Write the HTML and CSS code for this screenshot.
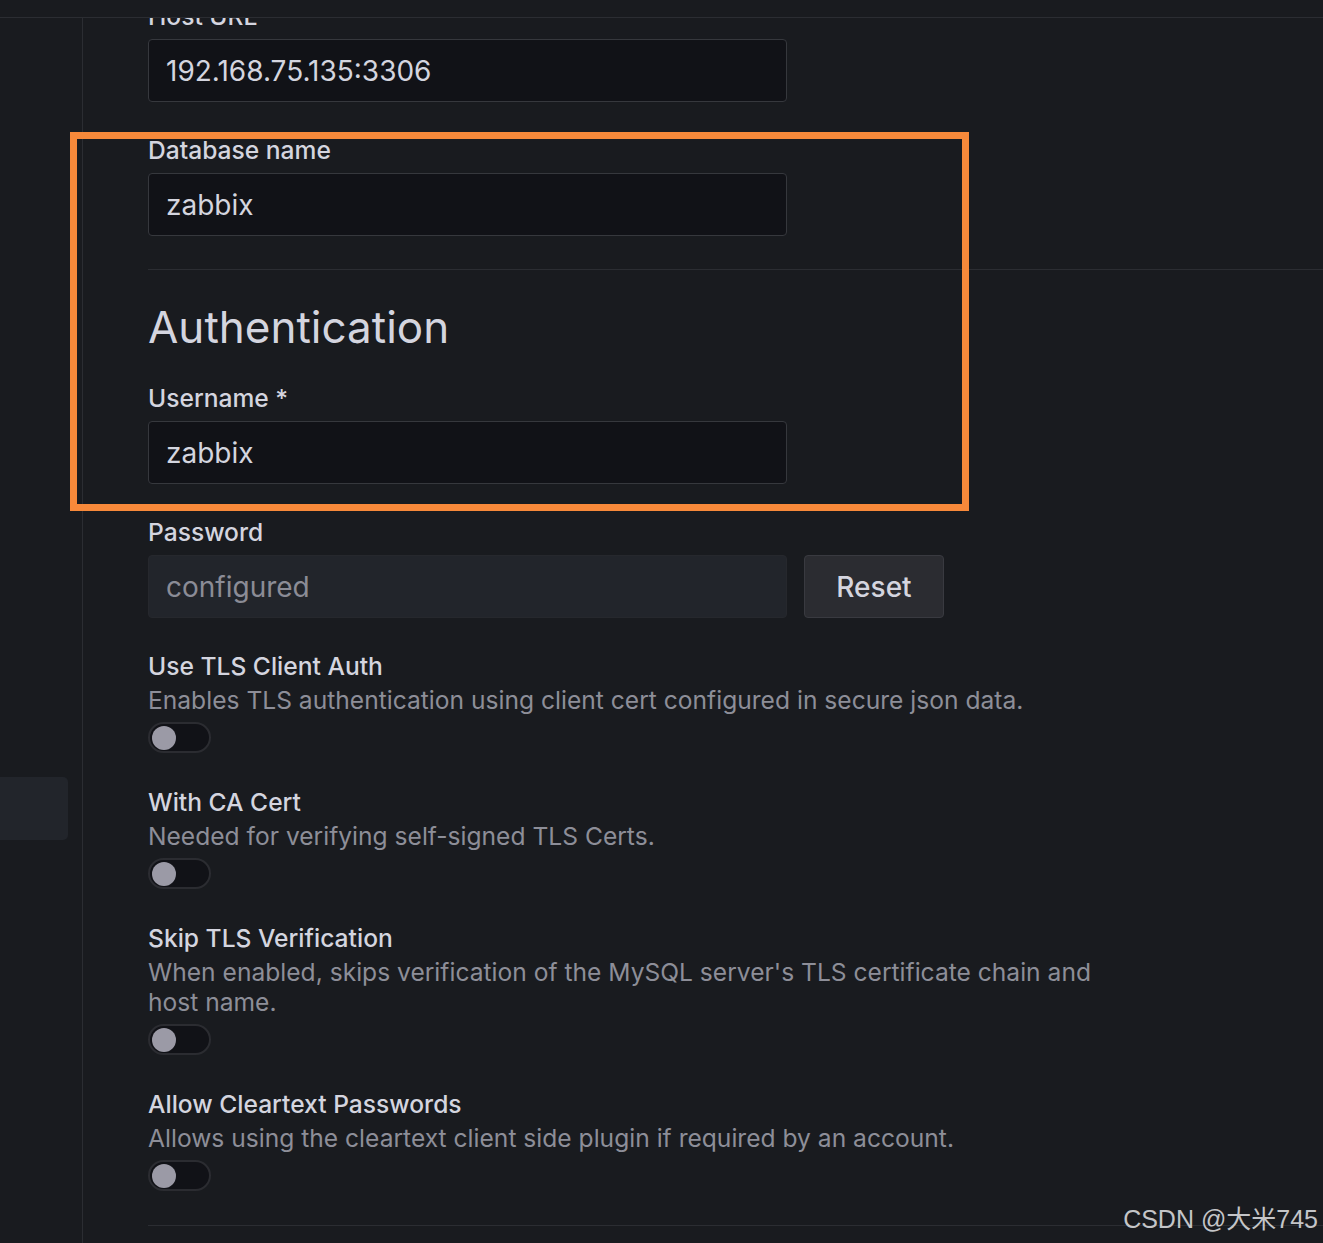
FILE: index.html
```html
<!DOCTYPE html>
<html lang="en">
<head>
    <meta charset="UTF-8">
    <meta name="viewport" content="width=device-width, initial-scale=1.0">
    <title>MySQL data source</title>
    <link rel="stylesheet" href="styles.css">
</head>
<body>
    <div class="topbar"></div>
    <div class="frame">
        <nav class="sidebar">
            <div class="nav-item"></div>
        </nav>
        <section class="main">
            <div class="field first">
                <label class="label">Host URL</label>
                <div class="input">192.168.75.135:3306</div>
            </div>
            <div class="field">
                <label class="label">Database name</label>
                <div class="input">zabbix</div>
            </div>
            <hr class="divider">

            <h3 class="heading">Authentication</h3>
            <div class="field">
                <label class="label">Username *</label>
                <div class="input">zabbix</div>
            </div>
            <div class="field">
                <label class="label">Password</label>
                <div class="row">
                    <div class="input disabled">configured</div>
                    <button class="button" type="button">Reset</button>
                </div>
            </div>

            <div class="toggle-field">
                <div class="label tight">Use TLS Client Auth</div>
                <div class="desc">Enables TLS authentication using client cert configured in secure json data.</div>
                <div class="switch"><span class="knob"></span></div>
            </div>
            <div class="toggle-field">
                <div class="label tight">With CA Cert</div>
                <div class="desc">Needed for verifying self-signed TLS Certs.</div>
                <div class="switch"><span class="knob"></span></div>
            </div>
            <div class="toggle-field">
                <div class="label tight">Skip TLS Verification</div>
                <div class="desc">When enabled, skips verification of the MySQL server's TLS certificate chain and host name.</div>
                <div class="switch"><span class="knob"></span></div>
            </div>
            <div class="toggle-field">
                <div class="label tight">Allow Cleartext Passwords</div>
                <div class="desc">Allows using the cleartext client side plugin if required by an account.</div>
                <div class="switch"><span class="knob"></span></div>
            </div>
            <hr class="divider">
        </section>
    </div>

    <div class="highlight"></div>
    <div class="watermark">CSDN @大米745</div>
</body>
</html>
```

FILE: styles.css
```css
body {
    margin: 0px;
    height: 1243px;
    overflow: hidden;
    background-color: #191b1f;
    font-family: Inter, "Noto Sans", sans-serif;
    color: #d4d5df;
    position: relative;
}
.topbar {
    height: 17px;
    border-bottom: 1px solid #2b2d32;
}
.frame {
    display: flex;
    height: 1225px;
}
.sidebar {
    width: 82px;
    flex-shrink: 0;
    border-right: 1px solid #2b2d32;
}
.nav-item {
    margin-top: 759px;
    width: 68px;
    height: 63px;
    background-color: #22252b;
    border-radius: 0px 5px 5px 0px;
}
.main {
    flex: 1;
    overflow: hidden;
    padding-left: 65px;
}
.field {
    margin-bottom: 33px;
}
.field.first {
    margin-top: -17px;
}
.label {
    display: block;
    font-size: 24.6px;
    line-height: 30px;
    font-weight: 500;
    margin-bottom: 8px;
}
.label.tight {
    margin-bottom: 4px;
}
.input {
    box-sizing: border-box;
    width: 639px;
    height: 63px;
    padding: 0px 17px;
    display: flex;
    align-items: center;
    font-size: 28px;
    background-color: #111217;
    border: 1px solid #36383d;
    border-radius: 4px;
}
.input.disabled {
    background-color: #22252b;
    border-color: #26282d;
    color: #8b8c96;
}
.row {
    display: flex;
    gap: 17px;
}
.button {
    box-sizing: border-box;
    width: 140px;
    height: 63px;
    font-family: inherit;
    font-size: 28px;
    font-weight: 500;
    color: #d4d5df;
    background-color: #2b2c31;
    border: 1px solid #393a40;
    border-radius: 4px;
}
.divider {
    margin: 0px;
    border: none;
    border-top: 1px solid #2b2d32;
}
.heading {
    margin: 31px 0px 30px 0px;
    font-size: 44px;
    line-height: 52px;
    font-weight: 400;
}
.toggle-field {
    margin-bottom: 34px;
}
.desc {
    max-width: 970px;
    font-size: 24.6px;
    line-height: 30px;
    color: #8d8e98;
    margin-bottom: 7px;
}
.switch {
    box-sizing: border-box;
    width: 63px;
    height: 31px;
    border: 2px solid #2b2c31;
    border-radius: 16px;
    background-color: #111217;
    display: flex;
    align-items: center;
    padding-left: 2px;
}
.knob {
    width: 24px;
    height: 24px;
    border-radius: 50%;
    background-color: #9b9aa6;
}
.highlight {
    position: absolute;
    left: 70px;
    top: 132px;
    width: 885px;
    height: 365px;
    border: 7px solid #f7893a;
}
.watermark {
    position: absolute;
    right: 5px;
    bottom: 8px;
    font-family: "Liberation Sans", "Noto Sans CJK SC", sans-serif;
    font-size: 25px;
    color: #c4c5c8;
}
```
